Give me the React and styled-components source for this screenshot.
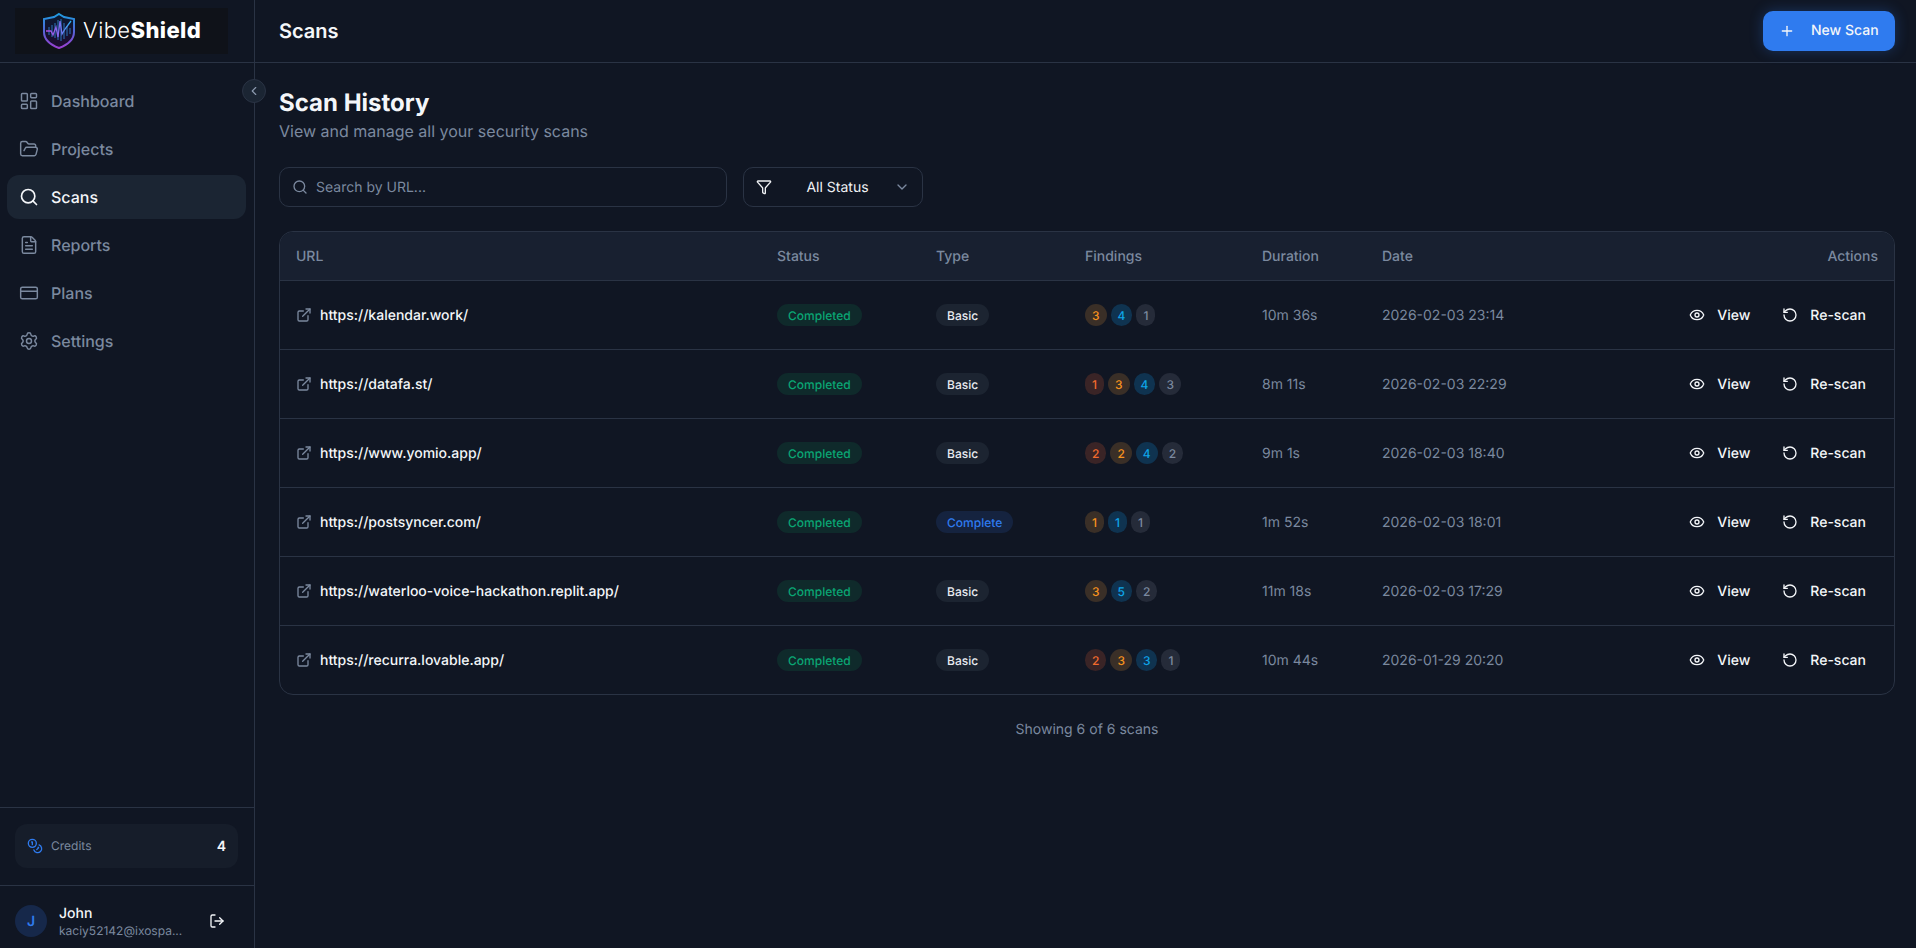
import React from 'react';
import styled, { createGlobalStyle } from 'styled-components';
import {
  LayoutDashboard, FolderOpen, Search, FileText, CreditCard, Settings, Coins, LogOut,
  ChevronLeft, ChevronDown, Plus, Funnel, ExternalLink, Eye, RotateCcw,
} from 'lucide-react';

const bg = '#101623';
const line = '#2a3344';
const muted = '#7b899f';

const GlobalStyle = createGlobalStyle`
  * { box-sizing: border-box; text-rendering: geometricPrecision; }
  html, body { margin: 0; height: 100%; background: ${bg}; }
  body { font-family: Inter, "Liberation Sans", sans-serif; color: #f4f6f9; }
`;

const Shell = styled.div`
  display: flex;
  height: 948px;
  overflow: hidden;
`;

const Sidebar = styled.aside`
  position: relative;
  flex: none;
  width: 255px;
  display: flex;
  flex-direction: column;
  border-right: 1px solid ${line};
`;

const LogoBar = styled.div`
  height: 63px;
  flex: none;
  padding: 8px 26px 8px 15px;
  border-bottom: 1px solid ${line};
`;

const LogoBox = styled.div`
  height: 46px;
  display: flex;
  align-items: center;
  justify-content: center;
  gap: 7px;
  background: #0f1219;
`;

const LogoText = styled.span`
  font-size: 22px;
  font-weight: 300;
  letter-spacing: 0.4px;
  color: #fff;
  b { font-weight: 800; }
`;

const Collapse = styled.button`
  position: absolute;
  top: 79px;
  right: -12px;
  width: 24px;
  height: 24px;
  padding: 0;
  display: flex;
  align-items: center;
  justify-content: center;
  border-radius: 50%;
  border: 1px solid ${line};
  background: #1b2533;
  color: #8d9bb0;
  z-index: 2;
`;

const Nav = styled.nav`
  flex: 1;
  display: flex;
  flex-direction: column;
  gap: 4px;
  padding: 16px 8px 0 7px;
`;

const NavItem = styled.a`
  height: 44px;
  display: flex;
  align-items: center;
  gap: 12px;
  padding: 0 12px;
  border-radius: 12px;
  font-size: 16px;
  font-weight: 500;
  color: ${p => (p.$active ? '#f4f6f9' : muted)};
  background: ${p => (p.$active ? '#1b2533' : 'transparent')};
`;

const CreditsWrap = styled.div`
  flex: none;
  height: 78px;
  padding: 16px 16px 0 15px;
  border-top: 1px solid ${line};
`;

const CreditsCard = styled.div`
  height: 44px;
  display: flex;
  align-items: center;
  gap: 8px;
  padding: 0 12px;
  border-radius: 12px;
  background: #161d2a;
`;

const CreditsLabel = styled.span`
  flex: 1;
  font-size: 12px;
  line-height: 14px;
  padding-bottom: 1px;
  color: ${muted};
`;

const CreditsValue = styled.span`
  font-size: 14px;
  font-weight: 600;
`;

const UserRow = styled.div`
  flex: none;
  height: 63px;
  display: flex;
  align-items: center;
  gap: 12px;
  padding: 8px 0 0 15px;
  border-top: 1px solid ${line};
`;

const Avatar = styled.div`
  width: 32px;
  height: 32px;
  flex: none;
  display: flex;
  align-items: center;
  justify-content: center;
  border-radius: 50%;
  background: #16284a;
  color: #2f7bef;
  font-size: 14px;
  font-weight: 600;
`;

const UserText = styled.div`
  flex: none;
  width: 126px;
  padding-top: 2px;
`;

const UserName = styled.div`
  font-size: 14px;
  line-height: 18px;
  font-weight: 500;
`;

const UserMail = styled.div`
  font-size: 12px;
  line-height: 16px;
  color: ${muted};
  white-space: nowrap;
`;

const SignOut = styled.span`
  display: flex;
  margin-left: 12px;
`;

const Main = styled.main`
  flex: 1;
  min-width: 0;
  display: flex;
  flex-direction: column;
`;

const TopBar = styled.header`
  height: 63px;
  flex: none;
  display: flex;
  align-items: center;
  justify-content: space-between;
  padding: 0 21px 1px 24px;
  border-bottom: 1px solid ${line};
`;

const TopTitle = styled.h1`
  margin: 0;
  font-size: 20px;
  font-weight: 600;
`;

const NewScan = styled.button`
  width: 132px;
  height: 40px;
  display: flex;
  align-items: center;
  gap: 16px;
  padding: 0 16px;
  border: 0;
  border-radius: 10px;
  background: #2f7bef;
  color: #f4f6f9;
  font: 450 14px Inter, sans-serif;
  box-shadow: 0 0 14px rgba(47, 123, 239, 0.3);
`;

const Content = styled.div`
  padding: 24px 21px 0 24px;
`;

const Heading = styled.h2`
  margin: 0;
  font-size: 24px;
  line-height: 32px;
  font-weight: 700;
`;

const Sub = styled.p`
  margin: 0;
  font-size: 16px;
  line-height: 24px;
  color: ${muted};
`;

const Filters = styled.div`
  display: flex;
  gap: 16px;
  margin-top: 24px;
`;

const SearchBox = styled.div`
  width: 448px;
  height: 40px;
  display: flex;
  align-items: center;
  gap: 8px;
  padding: 0 12px;
  border: 1px solid ${line};
  border-radius: 10px;
  font-size: 14px;
  color: ${muted};
`;

const StatusSelect = styled.div`
  width: 180px;
  height: 40px;
  display: flex;
  align-items: center;
  justify-content: space-between;
  padding: 0 12px;
  border: 1px solid ${line};
  border-radius: 10px;
  font-size: 14px;
  color: #f0f2f5;
`;

const StatusValue = styled.span`
  margin-left: 9px;
`;

const TableCard = styled.div`
  margin-top: 24px;
  border: 1px solid ${line};
  border-radius: 14px;
  overflow: hidden;
`;

const Table = styled.table`
  width: 100%;
  table-layout: fixed;
  border-collapse: separate;
  border-spacing: 0;
`;

const Th = styled.th`
  height: 49px;
  padding: 0 16px;
  background: #182030;
  border-bottom: 1px solid ${line};
  font-size: 14px;
  font-weight: 500;
  color: ${muted};
  text-align: ${p => p.$align || 'left'};
`;

const Td = styled.td`
  height: 69px;
  padding: 0 16px;
  border-bottom: 1px solid ${line};
  font-size: 14px;
  color: ${muted};
  white-space: nowrap;
  tr:last-child & {
    height: 68px;
    border-bottom: 0;
  }
`;

const UrlCell = styled.div`
  display: flex;
  align-items: center;
  gap: 8px;
  color: ${muted};
  span {
    color: #f4f6f9;
    font-weight: 450;
  }
`;

const Pill = styled.span`
  display: inline-flex;
  align-items: center;
  height: 22px;
  padding: 0 11px;
  border-radius: 11px;
  font-size: 12px;
  font-weight: 500;
  color: ${p => p.$color};
  background: ${p => p.$bg};
`;

const FindingRow = styled.div`
  display: flex;
  gap: 4px;
`;

const severity = {
  high: ['#f26b2d', '#3a2426'],
  medium: ['#f7931e', '#3a2f27'],
  low: ['#0ea5e9', '#0f3350'],
  info: ['#7b899f', '#252b39'],
};

const Finding = styled.span`
  height: 22px;
  padding: 0 7px;
  display: flex;
  align-items: center;
  border-radius: 11px;
  font-size: 12px;
  font-weight: 500;
  color: ${p => severity[p.$level][0]};
  background: ${p => severity[p.$level][1]};
`;

const Actions = styled.div`
  display: flex;
  justify-content: flex-end;
  gap: 8px;
`;

const ActionButton = styled.button`
  height: 36px;
  display: flex;
  align-items: center;
  gap: 12px;
  padding: 0 12px;
  border: 0;
  background: transparent;
  color: #f4f6f9;
  font: 450 14px Inter, sans-serif;
`;

const Footnote = styled.p`
  margin: 25px 0 0;
  text-align: center;
  font-size: 14px;
  line-height: 20px;
  color: ${muted};
`;

const navItems = [
  ['Dashboard', LayoutDashboard],
  ['Projects', FolderOpen],
  ['Scans', Search, true],
  ['Reports', FileText],
  ['Plans', CreditCard],
  ['Settings', Settings],
];

const scans = [
  { url: 'https://kalendar.work/', type: 'Basic', findings: [['medium', 3], ['low', 4], ['info', 1]], duration: '10m 36s', date: '2026-02-03 23:14' },
  { url: 'https://datafa.st/', type: 'Basic', findings: [['high', 1], ['medium', 3], ['low', 4], ['info', 3]], duration: '8m 11s', date: '2026-02-03 22:29' },
  { url: 'https://www.yomio.app/', type: 'Basic', findings: [['high', 2], ['medium', 2], ['low', 4], ['info', 2]], duration: '9m 1s', date: '2026-02-03 18:40' },
  { url: 'https://postsyncer.com/', type: 'Complete', findings: [['medium', 1], ['low', 1], ['info', 1]], duration: '1m 52s', date: '2026-02-03 18:01' },
  { url: 'https://waterloo-voice-hackathon.replit.app/', type: 'Basic', findings: [['medium', 3], ['low', 5], ['info', 2]], duration: '11m 18s', date: '2026-02-03 17:29' },
  { url: 'https://recurra.lovable.app/', type: 'Basic', findings: [['high', 2], ['medium', 3], ['low', 3], ['info', 1]], duration: '10m 44s', date: '2026-01-29 20:20' },
];

const columns = [481, 159, 149, 177, 120, 180, 348];

const ShieldLogo = () => (
  <svg width="34" height="38" viewBox="0 0 34 38" fill="none">
    <defs>
      <linearGradient id="shieldEdge" x1="0" y1="0" x2="0" y2="1">
        <stop offset="0" stopColor="#1f9be0" />
        <stop offset="0.45" stopColor="#4c6ad8" />
        <stop offset="1" stopColor="#9a3fd0" />
      </linearGradient>
      <linearGradient id="shieldWave" x1="0" y1="0" x2="1" y2="0">
        <stop offset="0" stopColor="#b14be0" />
        <stop offset="0.55" stopColor="#7d6cf0" />
        <stop offset="1" stopColor="#2bb4f0" />
      </linearGradient>
      <linearGradient id="shieldFill" x1="0" y1="0" x2="0" y2="1">
        <stop offset="0" stopColor="#0a1a30" />
        <stop offset="1" stopColor="#1f0b30" />
      </linearGradient>
    </defs>
    <path d="M17 2 L22 5 L32 7 V20 C32 28 25 33 17 36 C9 33 2 28 2 20 V7 L12 5 Z" fill="url(#shieldFill)" stroke="url(#shieldEdge)" strokeWidth="2" />
    <path d="M7 15 V23 M10 13 V25 M13 11 V26 M16 8 V28 M19 7 V29 M22 11 V27 M25 14 V24 M28 16 V22" stroke="#2f8fe0" strokeWidth="1" opacity="0.8" />
    <path d="M4 19 H9 L11 23 L14 15 L16 25 L18 9 L20 22 L23 17 L29 9" stroke="url(#shieldWave)" strokeWidth="1.3" />
  </svg>
);

const App = () => (
  <>
    <GlobalStyle />
    <Shell>
      <Sidebar>
        <LogoBar>
          <LogoBox>
            <ShieldLogo />
            <LogoText>Vibe<b>Shield</b></LogoText>
          </LogoBox>
        </LogoBar>
        <Collapse><ChevronLeft size={14} /></Collapse>
        <Nav>
          {navItems.map(([label, Icon, active]) => (
            <NavItem key={label} $active={active}>
              <Icon size={20} strokeWidth={active ? 2 : 1.75} />
              {label}
            </NavItem>
          ))}
        </Nav>
        <CreditsWrap>
          <CreditsCard>
            <Coins size={16} color="#2f7bef" />
            <CreditsLabel>Credits</CreditsLabel>
            <CreditsValue>4</CreditsValue>
          </CreditsCard>
        </CreditsWrap>
        <UserRow>
          <Avatar>J</Avatar>
          <UserText>
            <UserName>John</UserName>
            <UserMail>kaciy52142@ixospa...</UserMail>
          </UserText>
          <SignOut><LogOut size={16} /></SignOut>
        </UserRow>
      </Sidebar>
      <Main>
        <TopBar>
          <TopTitle>Scans</TopTitle>
          <NewScan><Plus size={16} />New Scan</NewScan>
        </TopBar>
        <Content>
          <Heading>Scan History</Heading>
          <Sub>View and manage all your security scans</Sub>
          <Filters>
            <SearchBox><Search size={16} />Search by URL...</SearchBox>
            <StatusSelect>
              <Funnel size={16} />
              <StatusValue>All Status</StatusValue>
              <ChevronDown size={16} color={muted} />
            </StatusSelect>
          </Filters>
          <TableCard>
            <Table>
              <colgroup>
                {columns.map((w, i) => <col key={i} style={{ width: w }} />)}
              </colgroup>
              <thead>
                <tr>
                  <Th>URL</Th>
                  <Th>Status</Th>
                  <Th>Type</Th>
                  <Th>Findings</Th>
                  <Th>Duration</Th>
                  <Th>Date</Th>
                  <Th $align="right">Actions</Th>
                </tr>
              </thead>
              <tbody>
                {scans.map(scan => (
                  <tr key={scan.url}>
                    <Td>
                      <UrlCell>
                        <ExternalLink size={16} />
                        <span>{scan.url}</span>
                      </UrlCell>
                    </Td>
                    <Td><Pill $color="#0aa674" $bg="#0f2a2b">Completed</Pill></Td>
                    <Td>
                      {scan.type === 'Basic'
                        ? <Pill $color="#e8ebf0" $bg="#1c2431">Basic</Pill>
                        : <Pill $color="#2f7bef" $bg="#15233f">Complete</Pill>}
                    </Td>
                    <Td>
                      <FindingRow>
                        {scan.findings.map(([level, n], i) => <Finding key={i} $level={level}>{n}</Finding>)}
                      </FindingRow>
                    </Td>
                    <Td>{scan.duration}</Td>
                    <Td>{scan.date}</Td>
                    <Td>
                      <Actions>
                        <ActionButton><Eye size={16} />View</ActionButton>
                        <ActionButton><RotateCcw size={16} />Re-scan</ActionButton>
                      </Actions>
                    </Td>
                  </tr>
                ))}
              </tbody>
            </Table>
          </TableCard>
          <Footnote>Showing 6 of 6 scans</Footnote>
        </Content>
      </Main>
    </Shell>
  </>
);

export default App;
